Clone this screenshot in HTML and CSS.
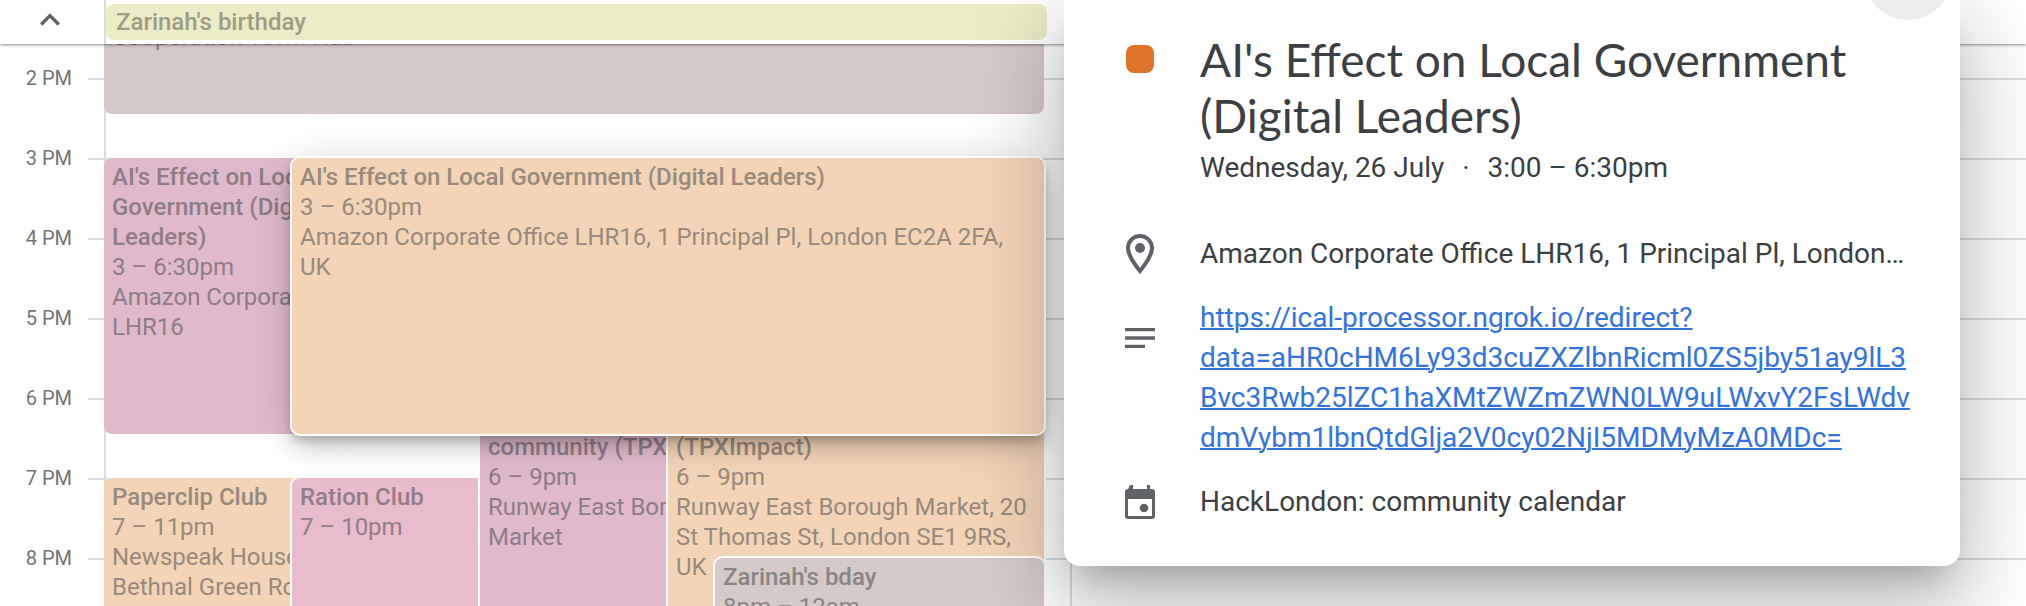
FILE: index.html
```html
<!DOCTYPE html>
<html lang="en-GB">
<head>
<meta charset="utf-8">
<meta name="viewport" content="width=device-width, initial-scale=1">
<title>Calendar</title>
<link rel="stylesheet" href="styles.css">
</head>
<body>
<div class="calendar">
  <header class="allday">
    <button class="toggle" type="button" aria-label="Collapse all-day section">
      <svg class="icon" viewBox="0 0 24 24" aria-hidden="true"><path d="M12 8l-6 6 1.41 1.41L12 10.83l4.59 4.58L18 14z"/></svg>
    </button>
    <div class="allday-day">
      <button class="chip" type="button">Zarinah's birthday</button>
    </div>
  </header>

  <main class="schedule">
    <div class="hour hour-2"><span class="hour-label">2 PM</span><span class="hour-line"></span></div>
    <div class="hour hour-3"><span class="hour-label">3 PM</span><span class="hour-line"></span></div>
    <div class="hour hour-4"><span class="hour-label">4 PM</span><span class="hour-line"></span></div>
    <div class="hour hour-5"><span class="hour-label">5 PM</span><span class="hour-line"></span></div>
    <div class="hour hour-6"><span class="hour-label">6 PM</span><span class="hour-line"></span></div>
    <div class="hour hour-7"><span class="hour-label">7 PM</span><span class="hour-line"></span></div>
    <div class="hour hour-8"><span class="hour-label">8 PM</span><span class="hour-line"></span></div>

    <section class="day today" aria-label="Wednesday 26 July">
      <article class="event grey cooperation">
        <p>Cooperation Town Hub</p>
      </article>
      <article class="event purple effect-copy">
        <h3>AI's Effect on Local<br>Government (Digital<br>Leaders)</h3>
        <p>3 – 6:30pm</p>
        <p>Amazon Corporate Office<br>LHR16</p>
      </article>
      <article class="event orange paperclip">
        <h3>Paperclip Club</h3>
        <p>7 – 11pm</p>
        <p>Newspeak House, 133<br>Bethnal Green Road</p>
      </article>
      <article class="event pink outlined ration">
        <h3>Ration Club</h3>
        <p>7 – 10pm</p>
      </article>
      <article class="event purple outlined community-copy">
        <h3>community (TPXImpact)</h3>
        <p>6 – 9pm</p>
        <p>Runway East Borough<br>Market</p>
      </article>
      <article class="event orange outlined community">
        <h3>(TPXImpact)</h3>
        <p>6 – 9pm</p>
        <p>Runway East Borough Market, 20 St Thomas St, London SE1 9RS, UK</p>
      </article>
      <article class="event grey outlined bday">
        <h3>Zarinah's bday</h3>
        <p>8pm – 12am</p>
      </article>
      <article class="event orange outlined selected effect">
        <h3>AI's Effect on Local Government (Digital Leaders)</h3>
        <p>3 – 6:30pm</p>
        <p>Amazon Corporate Office LHR16, 1 Principal Pl, London EC2A 2FA, UK</p>
      </article>
    </section>
    <section class="day tomorrow" aria-label="Thursday 27 July"></section>
  </main>
</div>

<aside class="popup" role="dialog" aria-labelledby="popup-title">
  <button class="close" type="button" aria-label="Close"></button>
  <div class="row heading">
    <span class="swatch"></span>
    <div>
      <h2 id="popup-title">AI's Effect on Local Government (Digital Leaders)</h2>
      <p class="when">Wednesday, 26 July<span class="dot">·</span>3:00 – 6:30pm</p>
    </div>
  </div>
  <div class="row place">
    <svg class="icon" viewBox="2 2 20 20" aria-hidden="true"><path d="M12 2C8.13 2 5 5.13 5 9c0 5.25 7 13 7 13s7-7.75 7-13c0-3.87-3.13-7-7-7zM7 9c0-2.76 2.24-5 5-5s5 2.24 5 5c0 2.88-2.88 7.19-5 9.88C9.92 16.21 7 11.85 7 9z"/><circle cx="12" cy="9" r="2.5"/></svg>
    <p class="one-line">Amazon Corporate Office LHR16, 1 Principal Pl, London…</p>
  </div>
  <div class="row notes">
    <svg class="icon" viewBox="0 0 24 24" aria-hidden="true"><path d="M3 18h12v-2H3v2zM3 6v2h18V6H3zm0 7h18v-2H3v2z"/></svg>
    <p><a href="#redirect">https://ical-processor.ngrok.io/redirect?<br>data=aHR0cHM6Ly93d3cuZXZlbnRicml0ZS5jby51ay9lL3<br>Bvc3Rwb25lZC1haXMtZWZmZWN0LW9uLWxvY2FsLWdv<br>dmVybm1lbnQtdGlja2V0cy02NjI5MDMyMzA0MDc=</a></p>
  </div>
  <div class="row source">
    <svg class="icon" viewBox="0 2 40 40" aria-hidden="true"><path fill-rule="evenodd" d="M10 5h3v4h14V5h3v4h2a3 3 0 0 1 3 3v24a3 3 0 0 1-3 3H8a3 3 0 0 1-3-3V12a3 3 0 0 1 3-3zM8 19v17h24V19z"/><circle cx="24" cy="28" r="4.3"/></svg>
    <p>HackLondon: community calendar</p>
  </div>
</aside>
</body>
</html>
```

FILE: styles.css
```css
* {
  box-sizing: border-box;
}

body {
  margin: 0;
  background: #fff;
  color: #3c4043;
  font-family: Roboto, "Liberation Sans", sans-serif;
  overflow: hidden;
}

h2,
h3,
p {
  margin: 0;
}

button {
  border: 0;
  padding: 0;
  background: none;
  font: inherit;
  color: inherit;
}

.icon {
  display: block;
  width: 40px;
  height: 40px;
  fill: #5f6368;
}

.calendar {
  height: 100vh;
  overflow: hidden;
  display: flex;
  flex-direction: column;
}

/* All-day strip */
.allday {
  flex: none;
  position: relative;
  z-index: 1;
  display: grid;
  grid-template-columns: 104px 966fr 956fr;
  height: 44px;
  background: #fff;
  box-shadow: 0 1px 3px rgba(0, 0, 0, 0.45);
}

.toggle {
  padding-left: 30px;
  height: 40px;
}

.allday-day {
  border-left: 2px solid #dadce0;
  padding: 4px 23px 4px 0;
}

.chip {
  display: block;
  width: 100%;
  height: 36px;
  padding: 0 10px;
  border-radius: 8px;
  background: #ececc6;
  color: #9d9e85;
  font-size: 24px;
  font-weight: 500;
  line-height: 36px;
  text-align: left;
}

/* Timed grid */
.schedule {
  flex: none;
  display: grid;
  grid-template-columns: 104px 966fr 956fr;
  grid-template-rows: 34px repeat(14, 40px);
}

.hour {
  grid-column: 1 / -1;
  display: grid;
  grid-template-columns: 72px 1fr;
  column-gap: 16px;
}

.hour-2 { grid-row: 2 / span 2; }
.hour-3 { grid-row: 4 / span 2; }
.hour-4 { grid-row: 6 / span 2; }
.hour-5 { grid-row: 8 / span 2; }
.hour-6 { grid-row: 10 / span 2; }
.hour-7 { grid-row: 12 / span 2; }
.hour-8 { grid-row: 14 / span 2; }

.hour-label {
  margin-top: -10px;
  color: #70757a;
  font-size: 20px;
  line-height: 20px;
  text-align: right;
}

.hour-line {
  border-top: 2px solid #dadce0;
}

.day {
  grid-row: 1 / -1;
  display: grid;
  grid-template-columns: repeat(20, 1fr);
  grid-template-rows: subgrid;
  padding-right: 26px;
  box-shadow: inset 2px 0 #dadce0;
}

.today { grid-column: 2; }
.tomorrow { grid-column: 3; }

.event {
  min-width: 0;
  margin-bottom: 4px;
  padding: 4px 8px;
  border-radius: 8px;
  overflow: hidden;
  font-size: 24px;
  line-height: 30px;
}

.event h3 {
  font-size: 24px;
  font-weight: 500;
  line-height: 30px;
}

.grey { background: #d5cac8; color: #888584; }
.purple { background: #e0bacb; color: #8e7d87; }
.orange { background: #f3d4b7; color: #988a7d; }
.pink { background: #e8bccd; color: #927e88; }

.outlined {
  box-shadow: 0 0 0 2px #fff;
}

.selected {
  box-shadow:
    0 0 0 2px #fff,
    0 12px 20px rgba(0, 0, 0, 0.14),
    0 4px 48px rgba(0, 0, 0, 0.16),
    0 6px 10px rgba(0, 0, 0, 0.2);
}

.cooperation {
  grid-area: 1 / 1 / 3 / -1;
  padding-top: 0;
  border-radius: 0 0 8px 8px;
}

.cooperation p {
  margin-top: -22px;
}

.effect-copy { grid-area: 4 / 1 / 11 / 8; }
.effect { grid-area: 4 / 5 / 11 / -1; }

.paperclip,
.ration,
.community-copy,
.community,
.bday {
  margin-bottom: 0;
  border-radius: 8px 8px 0 0;
}

.paperclip { grid-area: 12 / 1 / -1 / 8; }
.ration { grid-area: 12 / 5 / -1 / 12; }
.community-copy { grid-area: 10 / 9 / -1 / 16; }
.community { grid-area: 10 / 13 / -1 / -1; }
.bday { grid-area: 14 / 14 / -1 / -1; }

.community-copy,
.community {
  padding-top: 34px;
}

/* Event details */
.popup {
  position: absolute;
  z-index: 2;
  top: 0;
  right: 66px;
  width: 896px;
  padding: 32px 32px 44px 56px;
  border-radius: 0 0 16px 16px;
  background: #fff;
  box-shadow:
    0 48px 76px 6px rgba(0, 0, 0, 0.14),
    0 18px 92px 16px rgba(0, 0, 0, 0.12),
    0 22px 30px -14px rgba(0, 0, 0, 0.2);
  font-size: 28px;
  line-height: 40px;
}

.close {
  position: absolute;
  top: -68px;
  right: 8px;
  width: 88px;
  height: 88px;
  border-radius: 50%;
  background: #ebedec;
}

.row {
  display: grid;
  grid-template-columns: 40px 1fr;
  column-gap: 40px;
}

.swatch {
  width: 28px;
  height: 28px;
  margin: 13px 6px 0;
  border-radius: 8px;
  background: #df742d;
}

.popup h2 {
  font-family: Lato, "Open Sans", sans-serif;
  font-size: 46px;
  font-weight: 400;
  line-height: 56px;
}

.when {
  margin-top: 4px;
}

.dot {
  margin: 0 18px;
}

.place {
  margin-top: 46px;
}

.one-line {
  overflow: hidden;
  text-overflow: ellipsis;
  white-space: nowrap;
}

.notes {
  margin-top: 24px;
}

.notes .icon {
  margin-top: 20px;
}

.notes a {
  color: #3473e1;
  text-decoration-thickness: 2px;
}

.source {
  margin-top: 24px;
}
```
